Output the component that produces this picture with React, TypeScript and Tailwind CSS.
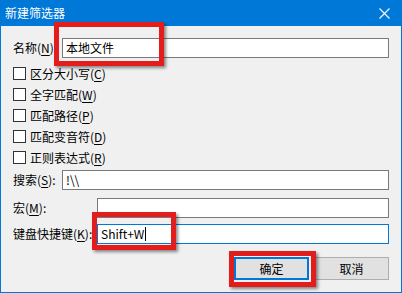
import React from "react";

const font = { fontFamily: '"Noto Sans CJK SC", "Noto Sans", sans-serif' };

function Key({ k }: { k: string }) {
  return (
    <>
      (<u className="underline-offset-2">{k}</u>)
    </>
  );
}

function Check({ label, k }: { label: string; k: string }) {
  return (
    <div className="flex h-[13px] items-center gap-[4px]">
      <div className="h-[13px] w-[13px] shrink-0 border border-[#333333] bg-white" />
      <span className="leading-none">
        {label}
        <Key k={k} />
      </span>
    </div>
  );
}

function Field({
  label,
  k,
  colon = true,
  width,
  value,
  focused = false,
  caret = false,
}: {
  label: string;
  k: string;
  colon?: boolean;
  width: string;
  value?: string;
  focused?: boolean;
  caret?: boolean;
}) {
  return (
    <div className="flex h-[20px] items-center">
      <span className={`${width} shrink-0 leading-none`}>
        {label}
        <Key k={k} />
        {colon ? ":" : ""}
      </span>
      <div
        className={`flex h-[20px] flex-1 items-center border bg-white px-[3px] ${
          focused ? "border-[#0078d7]" : "border-[#7a7a7a]"
        }`}
      >
        <span className="leading-none">{value}</span>
        {caret && <span className="ml-px h-[14px] w-px bg-black" />}
      </div>
    </div>
  );
}

export default function App() {
  return (
    <div
      className="relative flex h-[293px] w-[402px] flex-col border-x border-b border-[#0078d7] text-[12px] text-black"
      style={font}
    >
      <div className="flex h-[26px] shrink-0 items-center justify-between bg-[#0078d7] pl-[4px] pr-[10px] text-white">
        <span className="leading-none">新建筛选器</span>
        <svg width="11" height="11" viewBox="0 0 11 11" className="mr-[1px]">
          <path d="M0.5 0.5 L10.5 10.5 M10.5 0.5 L0.5 10.5" stroke="white" strokeWidth="1.1" />
        </svg>
      </div>

      <div className="flex flex-1 flex-col bg-[#f0f0f0] pl-[12px] pr-[12px] pt-[12px]">
        <Field label="名称" k="N" colon={false} width="w-[49px]" value="本地文件" />

        <div className="mt-[9px] flex flex-col gap-[8px]">
          <Check label="区分大小写" k="C" />
          <Check label="全字匹配" k="W" />
          <Check label="匹配路径" k="P" />
          <Check label="匹配变音符" k="D" />
          <Check label="正则表达式" k="R" />
        </div>

        <div className="mt-[6px]">
          <Field label="搜索" k="S" width="w-[49px]" value="!\\" />
        </div>
        <div className="mt-[8px]">
          <Field label="宏" k="M" width="w-[84px]" />
        </div>
        <div className="mt-[6px]">
          <Field label="键盘快捷键" k="K" width="w-[84px]" value="Shift+W" focused caret />
        </div>

        <div className="mt-[13px] flex justify-end gap-[5px]">
          <button className="flex h-[23px] w-[75px] items-center justify-center border-2 border-[#0078d7] bg-[#e1e1e1] leading-none">
            确定
          </button>
          <button className="flex h-[23px] w-[75px] items-center justify-center border border-[#adadad] bg-[#e1e1e1] leading-none">
            取消
          </button>
        </div>
      </div>

      {/* red annotation boxes */}
      <div className="pointer-events-none absolute left-[53px] top-[22px] h-[44px] w-[110px] border-[5px] border-[#e31c1c] shadow-[2px_2px_3px_rgba(0,0,0,0.45)]" />
      <div className="pointer-events-none absolute left-[91px] top-[212px] h-[38px] w-[84px] border-[5px] border-[#e31c1c] shadow-[2px_2px_3px_rgba(0,0,0,0.45)]" />
      <div className="pointer-events-none absolute left-[228px] top-[251px] h-[36px] w-[87px] border-[5px] border-[#e31c1c] shadow-[2px_2px_3px_rgba(0,0,0,0.45)]" />
    </div>
  );
}
